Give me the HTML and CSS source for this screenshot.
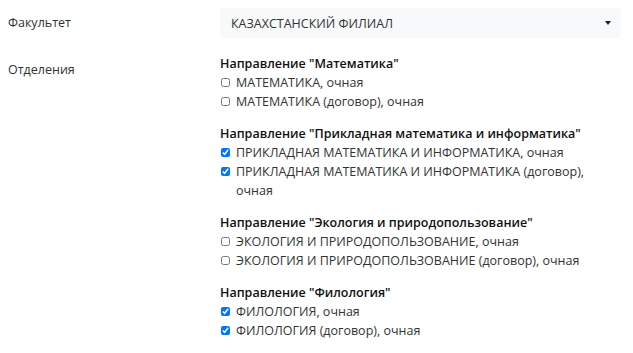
FILE: index.html
```html
<html>
<head>
    <title>Выбор отделений</title>
    <link rel="stylesheet" href="styles.css">
</head>
<body>

<div class="form">

    <div class="form-row">
        <label class="form-label">Факультет</label>
        <div class="select-box">
            <span>КАЗАХСТАНСКИЙ ФИЛИАЛ</span>
            <span class="caret"></span>
        </div>
    </div>

    <div class="form-row">
        <label class="form-label label-top">Отделения</label>
        <div class="groups">

            <div class="group">
                <div class="group-title">Направление "Математика"</div>
                <label class="check"><input type="checkbox"> <span>МАТЕМАТИКА, очная</span></label>
                <label class="check"><input type="checkbox"> <span>МАТЕМАТИКА (договор), очная</span></label>
            </div>

            <div class="group">
                <div class="group-title">Направление "Прикладная математика и информатика"</div>
                <label class="check"><input type="checkbox" checked> <span>ПРИКЛАДНАЯ МАТЕМАТИКА И ИНФОРМАТИКА, очная</span></label>
                <label class="check"><input type="checkbox" checked> <span>ПРИКЛАДНАЯ МАТЕМАТИКА И ИНФОРМАТИКА (договор), очная</span></label>
            </div>

            <div class="group">
                <div class="group-title">Направление "Экология и природопользование"</div>
                <label class="check"><input type="checkbox"> <span>ЭКОЛОГИЯ И ПРИРОДОПОЛЬЗОВАНИЕ, очная</span></label>
                <label class="check"><input type="checkbox"> <span>ЭКОЛОГИЯ И ПРИРОДОПОЛЬЗОВАНИЕ (договор), очная</span></label>
            </div>

            <div class="group">
                <div class="group-title">Направление "Филология"</div>
                <label class="check"><input type="checkbox" checked> <span>ФИЛОЛОГИЯ, очная</span></label>
                <label class="check"><input type="checkbox" checked> <span>ФИЛОЛОГИЯ (договор), очная</span></label>
            </div>

        </div>
    </div>

</div>

</body>
</html>
```

FILE: styles.css
```css
body 
{
    font-family: 'Open Sans', sans-serif;
    font-size: 12.5px;
    color: #212529;
    background-color: #fff;
    margin: 8px;
}

.form-row 
{
    display: grid;
    grid-template-columns: 212px 401px;
    margin-bottom: 16px;
}

.form-row:last-child 
{
    margin-bottom: 0;
}

.form-label 
{
    line-height: 30px;
    color: #333;
}

.label-top 
{
    line-height: 19px;
    padding-top: 6px;
}

.select-box 
{
    height: 30px;
    background-color: #f8f9fa;
    border-radius: 4px;
    display: flex;
    align-items: center;
    justify-content: space-between;
    padding: 0 10px 0 11px;
    color: #333;
}

.caret 
{
    width: 0;
    height: 0;
    border-left: 3.5px solid transparent;
    border-right: 3.5px solid transparent;
    border-top: 4px solid #222;
}

.groups 
{
    padding-right: 20px;
}

.group 
{
    margin-bottom: 13px;
}

.group:last-child 
{
    margin-bottom: 0;
}

.group-title 
{
    font-weight: 600;
    line-height: 19px;
    color: #111;
}

.check 
{
    display: flex;
    align-items: flex-start;
    line-height: 19px;
    color: #333;
}

.check input 
{
    width: 9px;
    height: 9px;
    margin: 5px 6px 0 1px;
    flex-shrink: 0;
}
```
